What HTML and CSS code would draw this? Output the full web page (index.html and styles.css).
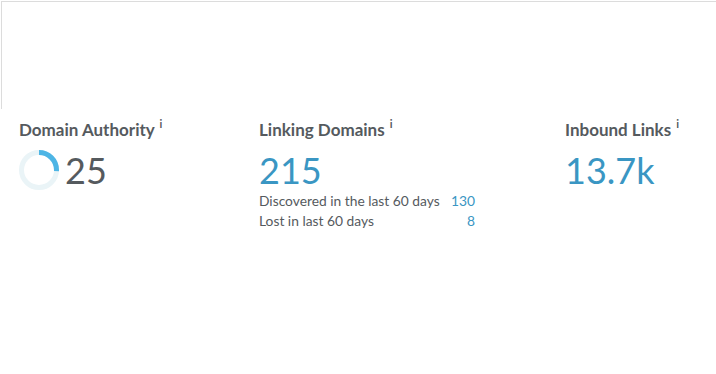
FILE: index.html
```html
<!DOCTYPE html>
<html lang="en">
    <head>
        <title>Link Metrics</title>
        <meta charset="utf-8" />
        <link rel="stylesheet" href="styles.css">
    </head>
    <body>
        <div class="frame"></div>

        <div class="stats">
            <div class="stat">
                <div class="stat-title">Domain Authority <sup class="info">i</sup></div>
                <div class="da">
                    <svg class="ring" width="40" height="40" viewBox="0 0 40 40">
                        <circle cx="20" cy="20" r="17.5" fill="none" stroke="#eaf4f7" stroke-width="5"/>
                        <circle cx="20" cy="20" r="17.5" fill="none" stroke="#4db5e5" stroke-width="5"
                                stroke-dasharray="28.5 110" transform="rotate(-90 20 20)"/>
                    </svg>
                    <span class="stat-value grey">25</span>
                </div>
            </div>

            <div class="stat">
                <div class="stat-title">Linking Domains <sup class="info">i</sup></div>
                <div class="stat-value">215</div>
                <table class="detail">
                    <tr>
                        <td>Discovered in the last 60 days</td>
                        <td class="num">130</td>
                    </tr>
                    <tr>
                        <td>Lost in last 60 days</td>
                        <td class="num">8</td>
                    </tr>
                </table>
            </div>

            <div class="stat">
                <div class="stat-title">Inbound Links <sup class="info">i</sup></div>
                <div class="stat-value">13.7k</div>
            </div>
        </div>
    </body>
</html>
```

FILE: styles.css
```css
body {
    margin: 0;
    padding: 0;
    background-color: #fff;
    font-family: Lato, "Open Sans", sans-serif;
    color: #555a5e;
}

/* empty embed box at the top */
.frame {
    margin: 1px 0 0 1px;
    height: 107px;
    border-top: 1px solid #dcdcdc;
    border-left: 1px solid #dcdcdc;
}

.stats {
    display: grid;
    grid-template-columns: 240px 306px 1fr;
    padding: 11px 0 0 19px;
}

.stat-title {
    font-size: 17px;
    font-weight: bold;
    line-height: 20px;
    color: #555a5e;
}
.info {
    font-size: 11px;
    vertical-align: 8px;
    line-height: 0;
    margin-left: 1px;
}

.stat-value {
    font-size: 36px;
    font-weight: normal;
    line-height: 40px;
    margin-top: 10px;
    color: #3a96c3;
}
.stat-value.grey {
    color: #555a5e;
    margin-top: 0;
}

.da {
    display: flex;
    align-items: center;
    gap: 6px;
    margin-top: 10px;
}
.ring {
    display: block;
}

/* numbers under Linking Domains */
.detail {
    width: 216px;
    border-collapse: collapse;
    font-size: 13.8px;
    color: #555a5e;
    margin-top: 1px;
}
.detail td {
    padding: 0;
    line-height: 20px;
}
.detail .num {
    text-align: right;
    color: #3a96c3;
}
```
